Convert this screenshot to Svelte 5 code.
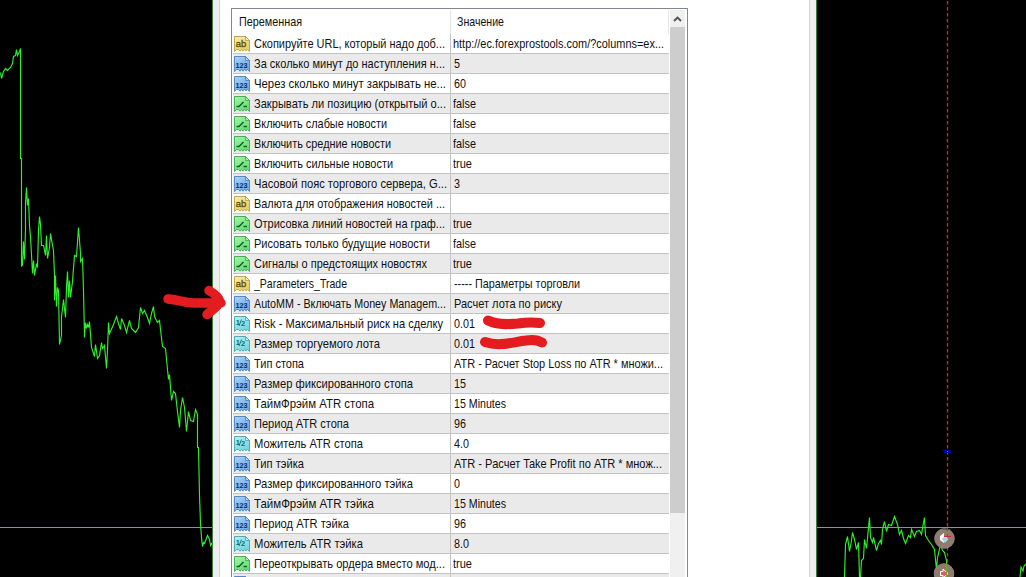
<script lang="ts">
  type Kind = 'text' | 'int' | 'bool' | 'real';
  type Row = { kind: Kind; name: string; value: string; nw?: number; vw?: number };

  // nw / vw: rendered widths of the name and value labels, in pixels
  const rows: Row[] = [
    { kind: 'text', name: 'Скопируйте URL, который надо доб...', value: 'http://ec.forexprostools.com/?columns=ex...', nw: 191, vw: 211 },
    { kind: 'int', name: 'За сколько минут до наступления н...', value: '5', nw: 191, vw: 6 },
    { kind: 'int', name: 'Через сколько минут закрывать не...', value: '60', nw: 192, vw: 12 },
    { kind: 'bool', name: 'Закрывать ли позицию (открытый о...', value: 'false', nw: 192, vw: 23 },
    { kind: 'bool', name: 'Включить слабые новости', value: 'false', nw: 133, vw: 23 },
    { kind: 'bool', name: 'Включить средние новости', value: 'false', nw: 137, vw: 23 },
    { kind: 'bool', name: 'Включить сильные новости', value: 'true', nw: 139, vw: 19 },
    { kind: 'int', name: 'Часовой пояс торгового сервера, G...', value: '3', nw: 193, vw: 6 },
    { kind: 'text', name: 'Валюта для отображения новостей ...', value: '', nw: 191 },
    { kind: 'bool', name: 'Отрисовка линий новостей на граф...', value: 'true', nw: 191, vw: 19 },
    { kind: 'bool', name: 'Рисовать только будущие новости', value: 'false', nw: 176, vw: 23 },
    { kind: 'bool', name: 'Сигналы о предстоящих новостях', value: 'true', nw: 173, vw: 19 },
    { kind: 'text', name: '_Parameters_Trade', value: '----- Параметры торговли', nw: 93, vw: 126 },
    { kind: 'int', name: 'AutoMM - Включать Money Managem...', value: 'Расчет лота по риску', nw: 192, vw: 108 },
    { kind: 'real', name: 'Risk - Максимальный риск на сделку', value: '0.01', nw: 189, vw: 21 },
    { kind: 'real', name: 'Размер торгуемого лота', value: '0.01', nw: 126, vw: 21 },
    { kind: 'int', name: 'Тип стопа', value: 'ATR - Расчет Stop Loss по ATR * множи...', nw: 50, vw: 209 },
    { kind: 'int', name: 'Размер фиксированного стопа', value: '15', nw: 159, vw: 12 },
    { kind: 'int', name: 'ТаймФрэйм ATR стопа', value: '15 Minutes', nw: 120, vw: 52 },
    { kind: 'int', name: 'Период ATR стопа', value: '96', nw: 95, vw: 12 },
    { kind: 'real', name: 'Можитель ATR стопа', value: '4.0', nw: 109, vw: 15 },
    { kind: 'int', name: 'Тип тэйка', value: 'ATR - Расчет Take Profit по ATR * множ...', nw: 50, vw: 208 },
    { kind: 'int', name: 'Размер фиксированного тэйка', value: '0', nw: 159, vw: 6 },
    { kind: 'int', name: 'ТаймФрэйм ATR тэйка', value: '15 Minutes', nw: 120, vw: 52 },
    { kind: 'int', name: 'Период ATR тэйка', value: '96', nw: 95, vw: 12 },
    { kind: 'real', name: 'Можитель ATR тэйка', value: '8.0', nw: 109, vw: 15 },
    { kind: 'bool', name: 'Переоткрывать ордера вместо мод...', value: 'true', nw: 191, vw: 19 },
    { kind: 'int', name: '', value: '' },
  ];

  const palette: Record<Kind, { light: string; fill: string; edge: string; ink: string }> = {
    text: { light: '#f7efad', fill: '#e3ce65', edge: '#b69d3e', ink: '#5e4a08' },
    int: { light: '#a9d2f8', fill: '#6ea9e6', edge: '#4a7fbb', ink: '#082f66' },
    bool: { light: '#a5f5a5', fill: '#68da78', edge: '#38a751', ink: '#0c6323' },
    real: { light: '#b5f2f2', fill: '#72d5dc', edge: '#42a4ad', ink: '#126b73' },
  };

  const leftLine =
    '0,72 1,78 3,71 5,68 7,70 10,67 12,63 13,56 15,55 16,49 17,55 19,51 20,48 20,158 21,158 21,266 22,264 23,241 24,259 25,230 25,203 26,187 27,205 28,198 29,225 30,237 31,254 32,273 33,260 34,275 36,263 37,267 38,230 39,216 40,224 41,245 43,245 45,255 46,235 47,258 49,247 50,233 52,245 53,250 54,275 54,300 55,275 56,306 57,287 58,290 59,344 61,335 61,317 63,299 65,317 66,287 67,271 68,297 69,280 70,297 72,281 74,255 76,256 78,227 80,253 80,261 82,258 83,290 84,337 85,322 86,328 87,324 88,327 89,321 91,347 94,356 95,344 97,358 99,355 101,342 102,348 104,345 106,368 107,350 108,322 109,333 113,324 116,316 118,323 120,329 121,318 124,325 126,332 129,320 131,328 135,332 138,327 140,307 142,313 144,310 147,317 149,323 151,313 153,306 154,316 157,322 159,320 160,329 162,346 165,348 167,369 168,379 169,374 171,400 173,391 175,393 177,411 179,427 180,410 182,397 184,407 186,431 188,411 190,420 193,421 195,409 197,414 197,447 198,447 199,495 200,523 201,537 202,546 203,542 204,543 207,535 209,539 210,545 211,543 212,545';

  const rightLine =
    '844,577 845,544 847,536 849,551 851,540 852,532 854,539 856,549 858,542 859,577 860,577 861,560 863,558 864,539 866,548 868,527 869,517 870,537 872,542 873,537 876,550 878,543 880,540 881,544 882,529 884,521 886,531 888,524 891,525 894,516 897,524 899,534 901,530 903,538 905,543 908,535 910,537 911,529 914,536 916,531 919,530 921,534 923,522 924,517 925,535 928,540 931,544 934,549 936,569 937,557 940,544 942,550 944,552 946,560 947,577';
</script>

{#snippet icon(kind: Kind, glyph: boolean)}
  {@const c = palette[kind]}
  <svg class="icon" width="16" height="16" viewBox="0 0 16 16">
    <defs>
      <linearGradient id="g-{kind}" x1="0" y1="0" x2="0.6" y2="1">
        <stop offset="0" stop-color={c.light} />
        <stop offset="1" stop-color={c.fill} />
      </linearGradient>
    </defs>
    <path d="M.5 .5H11.5L15.5 4.5V15.5L13.5 13.5L12 14.8L10.5 13.5L9 15.2L7.5 13.5L6 15.2L4.5 13.5L2.5 13.5L.5 15.5Z" fill="url(#g-{kind})" stroke={c.edge} stroke-width=".9" />
    <path d="M11.5 .5V4.5H15.5Z" fill={c.light} stroke={c.edge} stroke-width=".8" />
    {#if glyph && kind === 'bool'}
      <path d="M2.5 10.5H5L9.5 6M9.5 10.5H13" fill="none" stroke={c.ink} stroke-width="1.5" />
    {:else if glyph && kind === 'real'}
      <text x="1.8" y="9" font-size="7.5" fill={c.ink}>1</text>
      <path d="M5 10L7.5 3.5" stroke={c.ink} stroke-width=".9" />
      <text x="7" y="10.4" font-size="7.5" fill={c.ink}>2</text>
    {:else if glyph && kind === 'int'}
      <text x="1.6" y="11.6" textLength="12" lengthAdjust="spacingAndGlyphs" font-size="7.5" fill={c.ink}>123</text>
    {:else if glyph}
      <text class="thin" x="1.8" y="11.2" textLength="10.5" lengthAdjust="spacingAndGlyphs" font-size="9.5" fill={c.ink} stroke={c.ink}>ab</text>
    {/if}
  </svg>
{/snippet}

{#snippet label(text: string, width: number | undefined)}
  <svg class="label" height="19">
    {#if text}
      <text x="0" y="13" transform="scale(1 1.08)" textLength={width} lengthAdjust="spacingAndGlyphs">{text}</text>
    {/if}
  </svg>
{/snippet}

<div class="screen">
  <div class="chart left">
    <svg width="212" height="577" viewBox="0 0 212 577">
      <rect y="527" width="212" height="1" fill="#8791a0" />
      <polyline class="price" points={leftLine} transform="translate(.5 .5)" />
    </svg>
  </div>
  <div class="frame left-frame"></div>

  <main>
    <div class="list">
      <div class="table">
        <div class="head">
          <span class="name">{@render label('Переменная', 63)}</span>
          <span class="value">{@render label('Значение', 47)}</span>
        </div>
        {#each rows as row, i}
          <div class="row" class:odd={i % 2 === 1}>
            <div class="name">
              {@render icon(row.kind, row.name !== '')}
              {@render label(row.name, row.nw)}
            </div>
            <div class="value" class:tight={/^(http|true|false)/.test(row.value)}>
              {@render label(row.value, row.vw)}
            </div>
          </div>
        {/each}
      </div>
      <div class="scrollbar">
        <div class="up">
          <svg width="9" height="6" viewBox="0 0 9 6"><path d="M1 5L4.5 1.5L8 5" fill="none" stroke="#505050" stroke-width="1.8" /></svg>
        </div>
        <div class="thumb"></div>
      </div>
    </div>
  </main>

  <div class="frame right-frame"></div>
  <div class="chart right">
    <svg width="209" height="577" viewBox="817 0 209 577">
      <rect x="817" y="527" width="209" height="1" fill="#8791a0" />
      <polyline class="price" points={rightLine} transform="translate(.5 .5)" />
      <polyline class="price" points="1020,577 1021,567 1023,571 1024,566 1026,564" />
      <path d="M947.5 1V577" stroke="#e8222b" stroke-width="1.3" stroke-dasharray="3.5 2.5" />
      <path d="M943 450.5H950M944 452.5H951" stroke="#0808b4" />
      <circle cx="944.5" cy="538.5" r="9.8" fill="#927a6c" stroke="#85878b" />
      <circle cx="944" cy="573.5" r="9.8" fill="#927a6c" stroke="#85878b" />
      <path d="M940 536L944 533V536H947V541H944V543L940 540Z" fill="#fff" />
      <path d="M941.5 539L945 536L948.5 539L945 543Z" fill="#a8d8e8" />
      <path d="M943 529.5H950M944 536.5H951" stroke="#d3262d" />
      <path d="M947.5 528V537" stroke="#d4262e" stroke-dasharray="3 3" />
      <path d="M940.5 571.5H943V569L948 573.5L943 578V575.5H940.5Z" fill="#f05560" stroke="#fff" />
      <path d="M946.5 563V577" stroke="#7fa32c" />
    </svg>
  </div>

  <svg class="marks" width="1026" height="577" viewBox="0 0 1026 577">
    <path d="M168 299C180 300 184 303 194 303H221M209 290.5C215 294 219 297 220 302C217 307 213 309 207 314.5" stroke-width="9.5" />
    <path d="M488 320.5C497 325 507 324.5 518 323.5C527 322 533 322 540 323" stroke-width="10" />
    <path d="M485 342C500 347 513 342 526 340.5C534 339 538 340 542 342.5" stroke-width="10" />
  </svg>
</div>

<style>
  :global(body) {
    margin: 0;
    overflow: hidden;
  }

  .screen {
    position: relative;
    display: flex;
    width: 1026px;
    height: 577px;
    overflow: hidden;
    background: #fff;
    font-family: 'Liberation Sans', Arial, sans-serif;
    font-size: 11px;
    color: #111;
  }

  svg {
    display: block;
  }

  .chart {
    flex: none;
    box-sizing: border-box;
    background: #000;
  }

  .left {
    width: 213px;
    border-right: 1px solid #397d3b;
  }

  .right {
    width: 210px;
    border-left: 1px solid #397d3b;
  }

  .price {
    fill: none;
    stroke: #2ef02a;
    stroke-width: 1.15;
  }

  .frame {
    flex: none;
    box-sizing: border-box;
    width: 7px;
    background: #eee;
  }

  .left-frame {
    border-right: 1px solid #d5d5d9;
  }

  .right-frame {
    border-left: 1px solid #d5d5d9;
  }

  main {
    flex: 1;
    padding: 8px 0 0 11px;
  }

  .list {
    display: flex;
    box-sizing: border-box;
    width: 457px;
    height: 600px;
    padding: 1px 1px 0;
    border: 1px solid #828790;
  }

  .table {
    width: 436px;
  }

  .head,
  .row {
    display: flex;
  }

  .head {
    height: 24px;
  }

  .head .name,
  .head .value {
    box-sizing: border-box;
    padding: 2px 0 0 6px;
    border-right: 1px solid #e5e5e5;
  }

  .row {
    box-sizing: border-box;
    height: 20px;
    border-bottom: 1px solid #c3c3c3;
  }

  .row.odd {
    background: #eaeaea;
  }

  .name {
    display: flex;
    box-sizing: border-box;
    width: 218px;
    border-right: 1px solid #c3c3c3;
  }

  .value {
    display: flex;
    box-sizing: border-box;
    width: 218px;
    padding-left: 3px;
  }

  .value.tight {
    padding-left: 2px;
  }

  .icon {
    flex: none;
    margin: 2px 4px 0 1px;
    font-weight: bold;
  }

  .icon .thin {
    font-weight: normal;
    stroke-width: 0.3;
  }

  .label {
    flex: 1;
    min-width: 0;
    fill: currentColor;
  }

  .scrollbar {
    display: flex;
    flex-direction: column;
    width: 15px;
    margin-left: 1px;
    background: #f0f0f0;
  }

  .up {
    display: flex;
    align-items: center;
    justify-content: center;
    height: 17px;
  }

  .thumb {
    height: 486px;
    background: #cdcdcd;
  }

  .marks {
    position: absolute;
    inset: 0;
    fill: none;
    stroke: #e51c1f;
    stroke-linecap: round;
    stroke-linejoin: round;
    pointer-events: none;
  }
</style>
